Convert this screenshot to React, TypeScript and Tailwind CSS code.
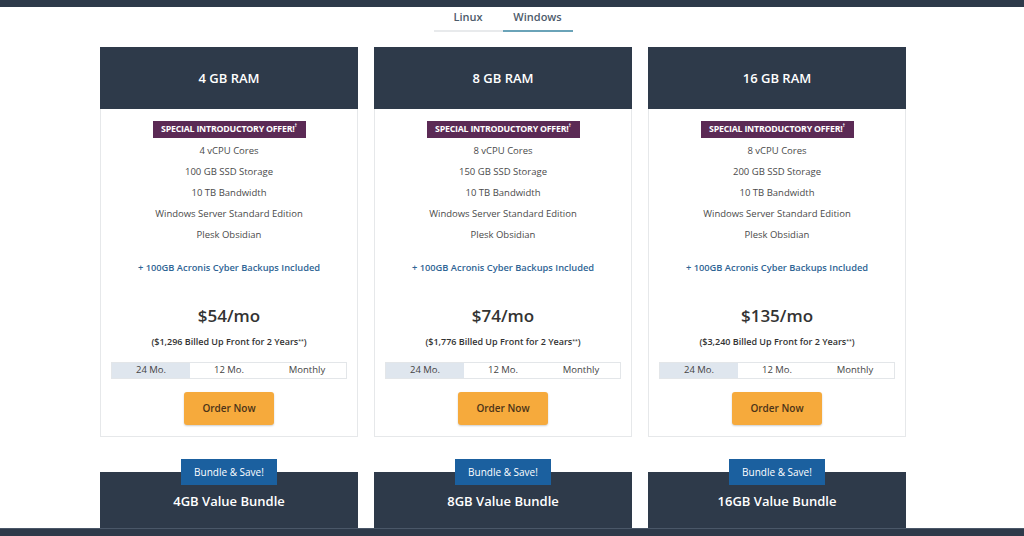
const plans = [
  {
    ram: '4 GB RAM',
    cores: '4 vCPU Cores',
    storage: '100 GB SSD Storage',
    price: '$54/mo',
    billed: '($1,296 Billed Up Front for 2 Years',
    bundle: '4GB Value Bundle',
  },
  {
    ram: '8 GB RAM',
    cores: '8 vCPU Cores',
    storage: '150 GB SSD Storage',
    price: '$74/mo',
    billed: '($1,776 Billed Up Front for 2 Years',
    bundle: '8GB Value Bundle',
  },
  {
    ram: '16 GB RAM',
    cores: '8 vCPU Cores',
    storage: '200 GB SSD Storage',
    price: '$135/mo',
    billed: '($3,240 Billed Up Front for 2 Years',
    bundle: '16GB Value Bundle',
  },
];

function PlanCard({ plan }: { plan: (typeof plans)[number] }) {
  const features = [plan.cores, plan.storage, '10 TB Bandwidth', 'Windows Server Standard Edition', 'Plesk Obsidian'];
  return (
    <div className="w-[258px] border border-[#e6e8ea] bg-white">
      <div className="h-[62px] bg-[#2e3a4a] flex items-center justify-center pt-[2px] -mx-px -mt-px">
        <h3 className="text-[13px] font-semibold text-white">{plan.ram}</h3>
      </div>
      <div className="flex flex-col items-center pt-[12px] pb-[11px]">
        <span className="h-[17px] w-[153px] bg-[#5b2a55] text-white text-[8.8px] font-bold flex items-center justify-center tracking-tight">
          SPECIAL INTRODUCTORY OFFER!<sup className="text-[5px] -mt-1">†</sup>
        </span>
        <ul className="mt-[2px] text-[9.5px] text-[#4a4a4a] text-center leading-[21px]">
          {features.map((f) => (
            <li key={f}>{f}</li>
          ))}
        </ul>
        <p className="mt-[12px] leading-[21px] text-[9.3px] font-semibold text-[#2f6595]">
          + 100GB Acronis Cyber Backups Included
        </p>
        <p className="mt-[26px] text-[17px] leading-[24px] font-semibold text-[#333]">{plan.price}</p>
        <p className="mt-[7px] text-[9px] leading-[14px] font-semibold text-[#333]">
          {plan.billed}
          <sup className="text-[5px]">**</sup>)
        </p>
        <div className="mt-[13px] w-[236px] h-[17px] grid grid-cols-3 border border-[#e3e6e9] text-[9.5px] text-[#444]">
          <span className="bg-[#dfe6ee] flex items-center justify-center">24 Mo.</span>
          <span className="flex items-center justify-center">12 Mo.</span>
          <span className="flex items-center justify-center">Monthly</span>
        </div>
        <button className="mt-[13px] w-[90px] h-[33px] rounded-[3px] bg-[#f6aa3c] shadow-[0_1px_2px_rgba(0,0,0,0.2)] text-[10px] font-semibold text-[#4b3318]">
          Order Now
        </button>
      </div>
    </div>
  );
}

function BundleCard({ title }: { title: string }) {
  return (
    <div className="relative w-[258px] h-[56px] bg-[#2e3a4a] flex items-center justify-center pt-[4px]">
      <span className="absolute -top-[13px] left-1/2 -translate-x-1/2 w-[96px] h-[26px] bg-[#1b609f] text-white text-[10px] flex items-center justify-center">
        Bundle &amp; Save!
      </span>
      <h3 className="text-[13px] font-semibold text-white">{title}</h3>
    </div>
  );
}

export default function App() {
  return (
    <div
      className="h-[536px] overflow-hidden bg-white flex flex-col"
      style={{ fontFamily: '"Open Sans", "Liberation Sans", sans-serif' }}
    >
      <div className="h-[7px] bg-[#2e3a4a] shrink-0" />

      {/* OS tabs */}
      <div className="flex justify-center pr-[18px]">
        <button className="w-[69px] pt-[3px] pb-[6px] border-b-2 border-[#e8eaec] text-[11px] leading-[14px] font-semibold text-[#4d5b6b]">
          Linux
        </button>
        <button className="w-[70px] pt-[3px] pb-[6px] border-b-2 border-[#6aa3b8] text-[11px] leading-[14px] font-semibold text-[#4d5b6b]">
          Windows
        </button>
      </div>

      {/* Plans */}
      <div className="mt-[15px] flex justify-center gap-[16px] pr-[18px]">
        {plans.map((p) => (
          <PlanCard key={p.ram} plan={p} />
        ))}
      </div>

      {/* Bundles */}
      <div className="mt-[35px] flex justify-center gap-[16px] pr-[18px]">
        {plans.map((p) => (
          <BundleCard key={p.bundle} title={p.bundle} />
        ))}
      </div>

      <div className="h-[8px] bg-[#2e3a4a] border-t border-[#4a5768] shrink-0" />
    </div>
  );
}
